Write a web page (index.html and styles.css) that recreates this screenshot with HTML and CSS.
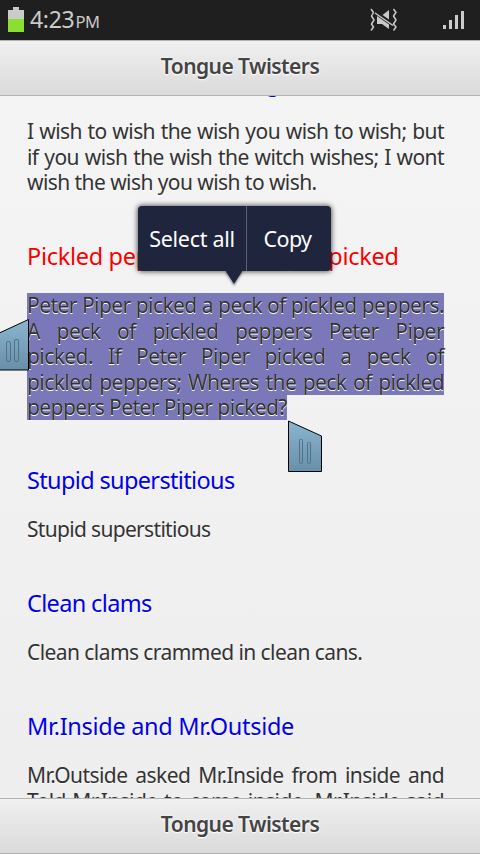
FILE: index.html
```html
<!DOCTYPE html>
<html lang="en">
<head>
    <meta charset="UTF-8">
    <meta name="viewport" content="width=device-width, initial-scale=1.0">
    <title>Tongue Twisters</title>
    <link rel="stylesheet" href="styles.css">
</head>
<body>

    <!-- Status bar -->
    <div class="statusbar">
        <svg class="battery" width="16" height="25" viewBox="0 0 16 25">
            <path d="M0 3h5V0h6v3h5v9H0z" fill="#cbcbcb"/>
            <path d="M0 12h16v13H0z" fill="#8ae02f"/>
        </svg>
        <div class="clock">4:23<span class="ampm">PM</span></div>
        <svg class="mute" width="28" height="24" viewBox="0 0 28 24" fill="none" stroke="#c8c8c8" stroke-width="1.5">
            <path d="M1 1l2.500 3.500L1.500 8l2.500 4-2.500 4L3.500 19 1 22.500M23.500 1l2.500 3.500-2.500 3.500 2.500 4-2.500 4 2.500 3-2.500 3.500" stroke-linejoin="round"/>
            <path d="M7 8l12 8.500V21L12 16H7z" fill="#c8c8c8" stroke="none"/>
            <path d="M12.500 7L19 2v9.500z" fill="#c8c8c8" stroke="none"/>
            <path d="M5 5l18 12.500"/>
        </svg>
        <svg class="signal" width="22" height="18" viewBox="0 0 22 18" fill="#cbcbcb">
            <path d="M0 14h3v4H0zM6 9h3v9H6zM12 4h3v14h-3zM18 0h3v18h-3z"/>
        </svg>
    </div>

    <div class="bar header"><span class="title">Tongue Twisters</span></div>

    <!-- Twisters -->
    <div class="content">
        <h3 class="heading cut">g</h3>
        <div class="text">
            <div class="line full">I wish to wish the wish you wish to wish; but</div>
            <div class="line full">if you wish the wish the witch wishes; I wont</div>
            <div class="line">wish the wish you wish to wish.</div>
        </div>

        <h3 class="heading active">Pickled peppers Peter Piper picked</h3>
        <div class="text selected">
            <div class="line full">Peter Piper picked a peck of pickled peppers.</div>
            <div class="line full">A peck of pickled peppers Peter Piper</div>
            <div class="line full">picked. If Peter Piper picked a peck of</div>
            <div class="line full">pickled peppers; Wheres the peck of pickled</div>
            <div class="line">peppers Peter Piper picked?</div>
        </div>

        <h3 class="heading tight">Stupid superstitious</h3>
        <div class="text">
            <div class="line tight">Stupid superstitious</div>
        </div>

        <h3 class="heading tight">Clean clams</h3>
        <div class="text">
            <div class="line">Clean clams crammed in clean cans.</div>
        </div>

        <h3 class="heading">Mr.Inside and Mr.Outside</h3>
        <div class="text">
            <div class="line full">Mr.Outside asked Mr.Inside from inside and</div>
            <div class="line full">Told Mr.Inside to come inside. Mr.Inside said</div>
        </div>
    </div>

    <div class="bar footer"><span class="title">Tongue Twisters</span></div>

    <!-- Selection menu -->
    <div class="popup">
        <div class="popup-item all">Select all</div>
        <div class="popup-item copy">Copy</div>
    </div>

    <!-- Selection handles -->
    <svg class="handle handle-start" width="29" height="53" viewBox="0 0 29 53">
        <defs>
            <linearGradient id="steel" x1="0" y1="0" x2="0" y2="1">
                <stop offset="0" stop-color="#8bb5d0"/>
                <stop offset="1" stop-color="#698fa8"/>
            </linearGradient>
        </defs>
        <path d="M-5 17L28.500 1.500v50.500H-5z" fill="url(#steel)" stroke="#000"/>
        <g fill="none" stroke="#4f7288">
            <rect x="6.500" y="23.500" width="4" height="20" rx="1.500"/>
            <rect x="14.500" y="21.500" width="4" height="22" rx="1.500"/>
        </g>
    </svg>
    <svg class="handle handle-end" width="34" height="53" viewBox="0 0 34 53">
        <path d="M.5 1L33.500 16v35.500H.5z" fill="url(#steel)" stroke="#000"/>
        <g fill="none" stroke="#4f7288">
            <rect x="11.500" y="19.500" width="3" height="24" rx="1"/>
            <rect x="19.500" y="22.500" width="3" height="21" rx="1"/>
        </g>
    </svg>

</body>
</html>
```
FILE: styles.css
```css
body {
    margin: 0;
    width: 480px;
    height: 854px;
    overflow: hidden;
    position: relative;
    display: flex;
    flex-direction: column;
    font-family: "Noto Sans", sans-serif;
    color: #333;
    background: #eee;
}

/* Status bar */
.statusbar {
    height: 40px;
    flex: none;
    display: flex;
    align-items: flex-start;
    background: #1f1f1f;
    color: #cbcbcb;
}

.battery {
    margin: 7px 0 0 8px;
}

.clock {
    margin-left: 6px;
    width: 334px;
    font-size: 23px;
    letter-spacing: -0.3px;
    line-height: 38px;
    white-space: nowrap;
}

.ampm {
    font-size: 16.5px;
    margin-left: 1px;
}

.mute {
    margin: 8px 0 0 6px;
}

.signal {
    margin: 11px 0 0 45px;
}

/* Header and footer bars */
.bar {
    height: 56px;
    flex: none;
    box-sizing: border-box;
    border-top: 1px solid #b3b3b3;
    border-bottom: 1px solid #b3b3b3;
    background: linear-gradient(#f0f0f0, #dadada);
    text-align: center;
}

.title {
    font-size: 21px;
    font-weight: 600;
    letter-spacing: -0.55px;
    line-height: 51px;
    color: #444;
    text-shadow: 0 1px 1px #fff, 0 0 3px #fff;
}

/* Page text */
.content {
    flex: 1;
    min-height: 0;
    overflow: hidden;
    padding: 0 36px 0 27px;
    background: linear-gradient(#f4f4f4, #eee);
    text-shadow: 0 1px 0 #fff;
}

.heading {
    margin: 46.3px 0 22.3px;
    font-size: 23.5px;
    font-weight: 400;
    letter-spacing: -0.3px;
    line-height: 29px;
    color: #0000e8;
    white-space: nowrap;
}

.heading.active {
    margin: 46.2px 0 22.6px;
    color: #f80000;
}

.selected + .heading {
    margin-top: 45.7px;
}

.heading.tight {
    letter-spacing: -0.65px;
}

/* Scrolled under the header */
.heading.cut {
    margin: -27px 0 21.4px;
    font-size: 22.5px;
    text-indent: 239px;
}

.text {
    font-size: 21px;
    letter-spacing: -0.57px;
    line-height: 25.4px;
}

.line {
    white-space: nowrap;
    width: max-content;
}

.line.tight {
    letter-spacing: -0.68px;
}

.line.full {
    width: 417px;
    text-align: justify;
    text-align-last: justify;
}

.selected .line {
    background: #7a78b8;
}

/* Selection menu */
.popup {
    position: absolute;
    left: 138px;
    top: 206px;
    width: 193px;
    height: 65px;
    display: flex;
    border-radius: 4px;
    background: #1e253d;
    color: #fff;
    font-size: 21.5px;
    letter-spacing: -0.3px;
    line-height: 66px;
    text-align: center;
    box-shadow: 0 0 5px 1px rgba(0, 0, 0, 0.6);
}

.popup::after {
    content: "";
    position: absolute;
    left: 87px;
    top: 64px;
    border: 9px solid transparent;
    border-top: 14px solid #1e253d;
    border-bottom: 0;
    filter: drop-shadow(0 2px 1px rgba(0, 0, 0, 0.4));
}

.all {
    width: 108px;
    border-right: 1px solid #5c6170;
}

.copy {
    flex: 1;
    padding-right: 3px;
    letter-spacing: -0.6px;
}

/* Selection handles */
.handle {
    position: absolute;
}

.handle-start {
    left: 0;
    top: 318px;
}

.handle-end {
    left: 288px;
    top: 420px;
}
```
